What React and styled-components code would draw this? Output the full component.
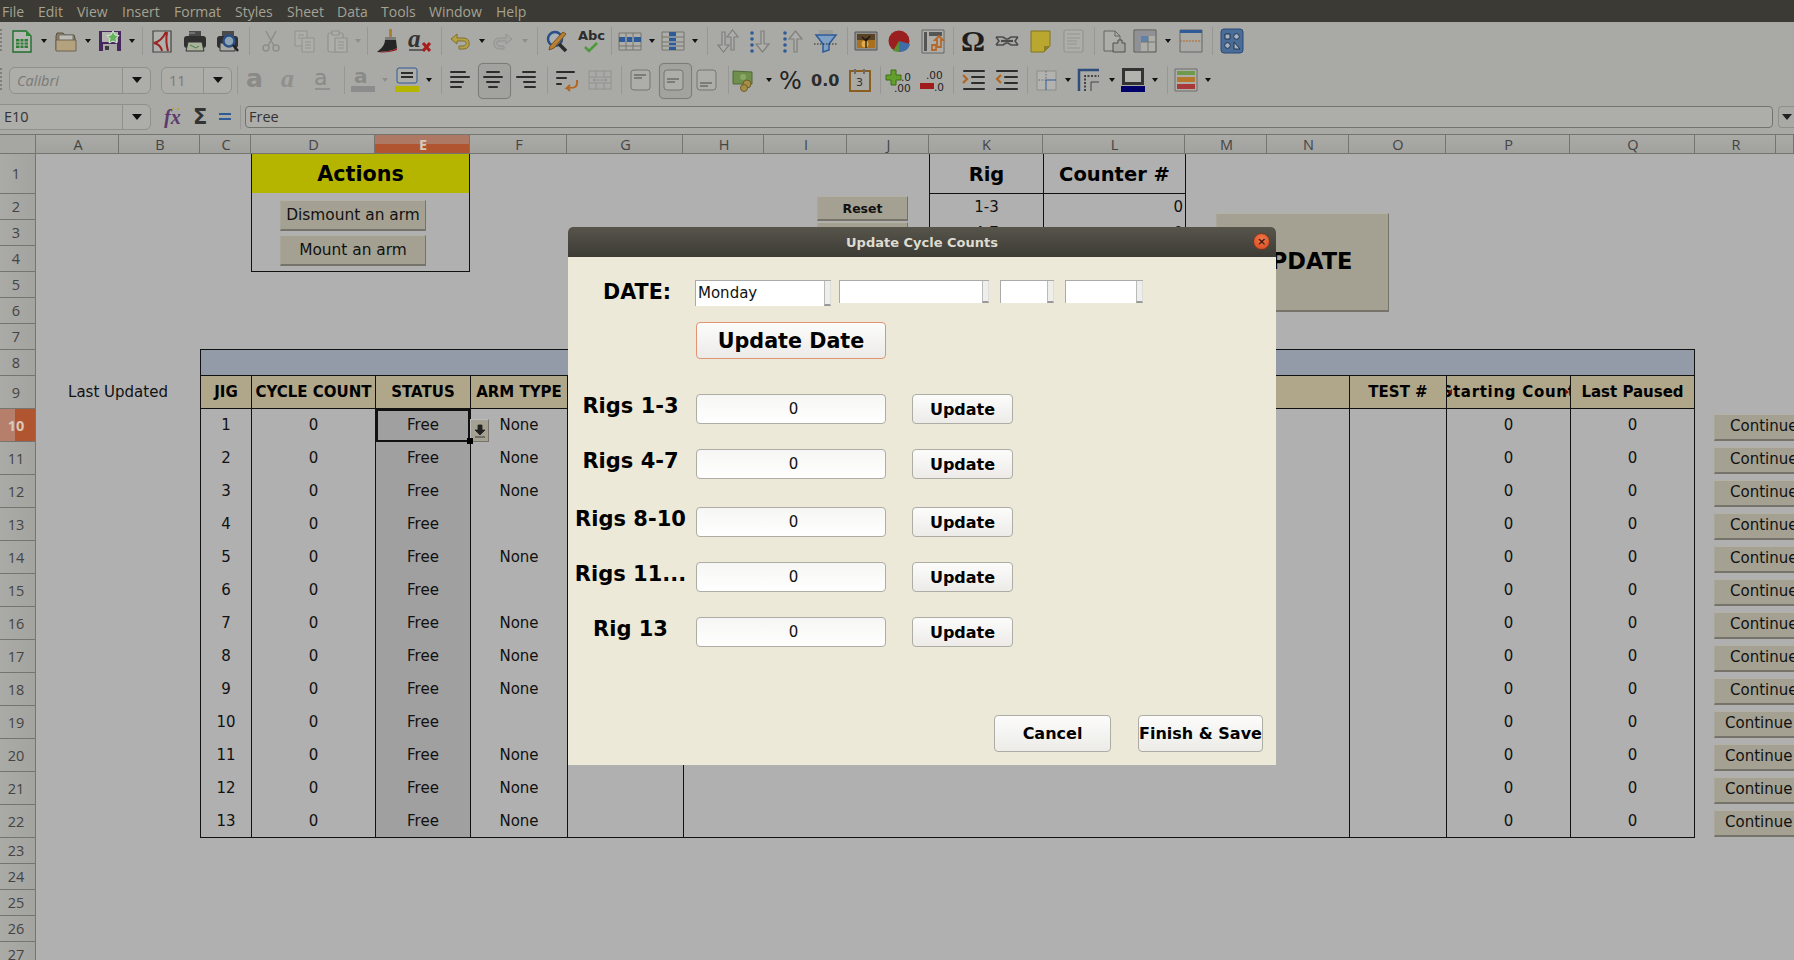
import React from 'react';
import styled, { createGlobalStyle } from 'styled-components';

const GlobalStyle = createGlobalStyle`
  html, body { margin: 0; padding: 0; background: #b0b0b0; overflow: hidden; }
  * { box-sizing: border-box; }
`;

const FONT = '"DejaVu Sans", Verdana, sans-serif';
const UI = '"Open Sans", "DejaVu Sans", sans-serif';
const SERIF = '"Liberation Serif", serif';

const T = ({ x, y, s = 12, w = 400, fill = '#222', i, f = FONT, children }) => (
  <text x={x} y={y} fontSize={s} fontWeight={w} fill={fill} fontStyle={i ? 'italic' : 'normal'} fontFamily={f}>{children}</text>
);

const bars = (ys, x1, x2) => ys.map((y, k) => <rect key={k} x={x1[k] ?? x1} y={y} width={(x2[k] ?? x2) - (x1[k] ?? x1)} height="2" rx="1" fill="#2c2c2c" />);

const ICONS = {
  doc: <><path d="M3 2h13l5 5v16H3z" fill="#b6b6b2" stroke="#1f6f2a" strokeWidth="1.4" /><path d="M16 1l5 6h-5z" fill="#2f8a38" /><path d="M6 10h12v9H6z" fill="#2d7d36" /><path d="M6 13h12M6 16h12M10 10v9M14 10v9" stroke="#b6b6b2" /></>,
  open: <><path d="M2 7l1-3h6l2 2h9l1 3v12H2z" fill="#8d7d60" stroke="#57503f" /><path d="M5 6h14v6H5z" fill="#bdbdb8" stroke="#77746a" /><path d="M2 11h20v11H2z" fill="#b4a27f" stroke="#6f6450" /></>,
  save: <><path d="M1 2h22v20H1z" fill="#46285e" /><path d="M4 3h16v10H4z" fill="#b4b4b0" /><path d="M5 15h14v7H5z" fill="#a9a9a5" /><path d="M7 17h4v4H7z" fill="#3b3b3b" /><path d="M15 2l2 4 4 .5-3 3 1 4.500-4-2-4 2 1-4.500-3-3 4-.5z" fill="#63b35b" stroke="#d9ead4" /></>,
  pdf: <><path d="M3 2h18v21H3z" fill="#b0b0ac" stroke="#444" strokeWidth="1.2" /><path d="M16 3C13 9 9 13 4 14c4 1 7 3 8 8M17 3c-1 6-1 12 1 19" fill="none" stroke="#9c2222" strokeWidth="2" /></>,
  print: <><path d="M6 2h12v6H6z" fill="#4a4a4a" /><rect x="1" y="7" width="22" height="12" rx="3" fill="#2f2f2f" /><path d="M6 4h6" stroke="#999" /><path d="M5 13h14l2 9H3z" fill="#a9b39c" stroke="#333" /><path d="M7 16l6 3 3-2" stroke="#4c7a4c" fill="none" /></>,
  preview: <><path d="M6 2h12v6H6z" fill="#4a4a4a" /><rect x="1" y="7" width="21" height="12" rx="3" fill="#2f2f2f" /><path d="M4 14h15v8H4z" fill="#a9a9a5" stroke="#333" /><circle cx="13" cy="12" r="5.500" fill="#8ea4b5" stroke="#2a4f86" strokeWidth="2.400" /><path d="M17 16l5 6" stroke="#222" strokeWidth="2.500" /></>,
  cut: <g fill="none" stroke="#8d8d8a" strokeWidth="1.500"><circle cx="7" cy="19" r="3" /><circle cx="17" cy="19" r="3" /><path d="M9 17L17 2M15 17L7 2" /></g>,
  copy: <g fill="#adadaa" stroke="#91918e"><path d="M3 2h12v15H3z" /><path d="M10 9h12v14H10z" /><path d="M6 6h6M6 9h3M13 13h6M13 16h6M13 19h6" /></g>,
  paste: <g fill="#adadaa" stroke="#91918e" strokeWidth="1.200"><rect x="3" y="4" width="15" height="19" rx="2" /><path d="M7 2h7v4H7z" /><path d="M10 9h12v14H10z" /><path d="M13 13h6M13 16h6M13 19h6" /></g>,
  brush: <><path d="M13 0h3v8h-3z" fill="#a88137" /><path d="M9 8h11v3H9z" fill="#7c7c78" /><path d="M9 11h11l1 8c-5 3-14 4-20 4 4-3 8-7 8-12z" fill="#252525" /><path d="M1 23c6 0 15-1 20-4v2c-5 2-14 3-20 2z" fill="#8c2020" /></>,
  clear: <><T x="0" y="18" s={25} w={700} i fill="#333" f={SERIF}>a</T><path d="M1 21h15" stroke="#444" strokeWidth="1.500" /><path d="M15 14l7 8M22 14l-7 8" stroke="#a51d1d" strokeWidth="3" /></>,
  undo: <path d="M9 5L3 10l6 5v-3h7c3 0 3 5-1 5h-4v3h5c7 0 7-11 0-11H9z" fill="#b6a246" stroke="#7f7030" />,
  redo: <path d="M15 5l6 5-6 5v-3H8c-3 0-3 5 1 5h4v3H8C1 20 1 9 8 9h7z" fill="#a5a5a2" stroke="#92928f" />,
  find: <><circle cx="10" cy="10" r="7" fill="#a9b0b7" stroke="#2a4f86" strokeWidth="2.500" /><path d="M14 15l7 7" stroke="#2a2a2a" strokeWidth="3.500" /><path d="M5 17L18 3l3 2L9 19l-5 2z" fill="#b98032" stroke="#76501e" /></>,
  spell: <><T x="0" y="11" s={13} w={700} fill="#2c2c2c">Abc</T><path d="M7 18l4 4 8-8" fill="none" stroke="#4d9a3a" strokeWidth="2.500" /></>,
  rows: <><path d="M1 4h22v17H1z" fill="#adadaa" stroke="#77776f" /><path d="M1 8h22v5H1z" fill="#2e5b96" /><path d="M8 4v17M15 4v17M1 17h22" stroke="#77776f" /><path d="M8 8v5M15 8v5" stroke="#b0b8c4" /></>,
  cols: <><path d="M1 3h22v18H1z" fill="#adadaa" stroke="#77776f" /><path d="M8 3h7v18H8z" fill="#2e5b96" /><path d="M1 8h22M1 13h22M1 17h22" stroke="#77776f" /><path d="M8 8h7M8 13h7M8 17h7" stroke="#b0b8c4" /></>,
  sort: <g fill="#adadaa" stroke="#7f7f7c" strokeWidth="1.200"><path d="M7 3h3v13h4l-5.500 7L3 16h4z" /><path d="M16 21h3V8h4l-5.500-7L12 8h4z" /></g>,
  sortasc: <><g fill="#2e5b96"><circle cx="4" cy="4" r="1.800" /><circle cx="4" cy="10" r="1.800" /><circle cx="4" cy="16" r="1.800" /><circle cx="4" cy="22" r="1.800" /></g><path d="M13 2h3v13h5l-6.500 8L8 15h5z" fill="#adadaa" stroke="#7f7f7c" strokeWidth="1.200" /></>,
  sortdesc: <><g fill="#2e5b96"><circle cx="4" cy="4" r="1.800" /><circle cx="4" cy="10" r="1.800" /><circle cx="4" cy="16" r="1.800" /><circle cx="4" cy="22" r="1.800" /></g><path d="M13 23h3V10h5L14.500 2 8 10h5z" fill="#adadaa" stroke="#7f7f7c" strokeWidth="1.200" /></>,
  filter: <><path d="M5 1h14v4H5z" fill="#9c9c99" /><path d="M2 6h20l-7 9v6l-6 2v-8z" fill="#7ea0c4" stroke="#2e5b96" strokeWidth="1.500" /><path d="M0 15h24" stroke="#222" strokeDasharray="1.500 1.500" /></>,
  image: <><path d="M1 3h22v18H1z" fill="#8f8f8c" stroke="#555" /><path d="M3 5h18v14H3z" fill="#a8701f" /><path d="M3 5h18v6H3z" fill="#5a4224" /><circle cx="11" cy="15" r="3.500" fill="#e0ad4a" /><path d="M12 19V9M12 12l-4-4M12 12l4-5" stroke="#1f1710" strokeWidth="1.300" fill="none" /></>,
  chart: <><circle cx="12" cy="12" r="10.500" fill="#9c1f1f" /><path d="M12 12l-6 10 6 1z" fill="#5d8e35" /><path d="M12 12l11 3c-1 5-5 8-11 8z" fill="#3d6ea5" /></>,
  pivot: <><path d="M1 1h22v23H1z" fill="#adadaa" stroke="#666" /><path d="M3 3h3v19H3zM8 3h13v4H8z" fill="#555" /><path d="M11 21v-5h5v-5h-2l4-4 4 4h-2v7h-5v3z" fill="none" stroke="#b5682a" strokeWidth="1.800" /></>,
  omega: <T x="-1" y="22" s={30} w={700} fill="#1e1e1e" f={SERIF}>Ω</T>,
  link: <g fill="none" stroke="#4c4c4c" strokeWidth="1.600"><path d="M1 8h7l3 2h2l3-2h7M1 16h7l3-2h2l3 2h7M1 8l3 4-3 4M23 8l-3 4 3 4" /><path d="M6 12h12" strokeWidth="2.200" /></g>,
  note: <><path d="M3 2h19v15l-6 6H3z" fill="#b9a730" stroke="#7f7420" /><path d="M16 23v-6h6z" fill="#8d7f25" /></>,
  headers: <g fill="#adadaa" stroke="#94948f" strokeWidth="1.200"><rect x="3" y="1" width="19" height="22" rx="2" /><path d="M6 5h13M6 9h13M6 12h10M6 15h10M6 19h13" /></g>,
  pprev: <><path d="M2 2h11l5 5v15H2z" fill="#adadaa" stroke="#66665f" /><path d="M13 2v5h5" fill="none" stroke="#66665f" /><path d="M12 14h5v-3h4v3h3v9H12z" transform="translate(-1 0)" fill="#a3a3a0" stroke="#4f4f4b" /></>,
  freeze: <><path d="M1 1h22v22H1z" fill="#adadaa" stroke="#55554f" /><path d="M2 2h20v5H2zM2 7h6v15H2z" fill="#8f9196" /><path d="M8 7h7v6H8z" fill="#5d82ad" /><path d="M8 13h14M15 7v15" stroke="#77776f" /></>,
  split: <><path d="M1 1h22v22H1z" fill="#a9a9a6" stroke="#666" /><path d="M1 1h22v3H1z" fill="#2e5b96" /><path d="M1 12h22" stroke="#b8682a" strokeDasharray="2 1" /></>,
  shapes: <><rect x="1" y="0" width="22" height="24" rx="3" fill="#4a6d98" stroke="#2b4b76" /><path d="M5 5h5v5H5z" fill="#a9b3bf" stroke="#1d3350" /><circle cx="16.500" cy="7.500" r="2.800" fill="#a9b3bf" stroke="#1d3350" /><circle cx="7.500" cy="16.500" r="2.800" fill="#a9b3bf" stroke="#1d3350" /><path d="M14 13v7h6z" fill="#a9b3bf" stroke="#1d3350" /></>,
  bold: <T x="1" y="19" s={25} w={700} fill="#8a8a87">a</T>,
  italic: <T x="3" y="19" s={26} w={700} i fill="#90908d" f={SERIF}>a</T>,
  underline: <><T x="3" y="17" s={22} fill="#8a8a87">a</T><path d="M4 21h15" stroke="#8a8a87" strokeWidth="1.500" /></>,
  color: <><T x="3" y="15" s={20} w={700} fill="#8a8a87">a</T><path d="M0 18h24v6H0z" fill="#8c8c8c" /></>,
  bg: <><rect x="2" y="0" width="20" height="15" rx="2" fill="#adadaa" stroke="#2e5b96" /><path d="M6 5h12M6 9h12" stroke="#2c2c2c" strokeWidth="2" /><path d="M0 18h24v6H0z" fill="#b5b500" /></>,
  alignl: bars([3, 8, 13, 18], 2, [18, 22, 16, 14]),
  alignc: bars([3, 8, 13, 18], [5, 2, 5, 7], [19, 22, 19, 17]),
  alignr: bars([3, 8, 13, 18], [8, 2, 9, 10], [22, 22, 22, 22]),
  wrap: <>{bars([3, 9, 15], 1, [20, 12, 7])}<path d="M22 12c1 8-3 8-10 8l3-3m-3 3l3 3" fill="none" stroke="#b2661f" strokeWidth="2" /></>,
  merge: <g fill="none" stroke="#92928f"><path d="M1 3h22v18H1zM1 9h22M1 15h22M8 3v6M16 3v6M8 15v6M16 15v6" /><path d="M5 12h14M5 12l2-2M5 12l2 2M19 12l-2-2M19 12l-2 2" /></g>,
  vtop: <><rect x="2" y="2" width="19" height="20" rx="3" fill="#adadaa" stroke="#77776f" /><path d="M5 7h12M5 10h8" stroke="#4a4a4a" /></>,
  vcenter: <><rect x="2" y="2" width="19" height="20" rx="3" fill="#adadaa" stroke="#77776f" /><path d="M5 11h12M5 14h8" stroke="#4a4a4a" /></>,
  vbottom: <><rect x="2" y="2" width="19" height="20" rx="3" fill="#adadaa" stroke="#77776f" /><path d="M5 15h12M5 18h8" stroke="#4a4a4a" /></>,
  money: <><path d="M0 3l19 1v12H0z" fill="#6f8f4d" stroke="#4f6b35" /><circle cx="10" cy="9" r="3" fill="#88a868" /><circle cx="14" cy="16" r="4" fill="#a58f45" stroke="#6f5f2a" /><circle cx="11" cy="20" r="3.500" fill="#a58f45" stroke="#6f5f2a" /></>,
  percent: <T x="-1" y="21" s={24} fill="#222">%</T>,
  number: <T x="-1" y="18" s={16} w={700} fill="#2c2c2c">0.0</T>,
  date: <><rect x="2" y="3" width="20" height="20" fill="#a9a9a6" stroke="#8a5d21" strokeWidth="2" /><path d="M7 1v5M16 1v5" stroke="#6b6b6b" strokeWidth="2" /><T x="8" y="18" s={11} fill="#333">3</T></>,
  adddec: <><path d="M6 2h5v5h5v5h-5v5H6v-5H1V7h5z" transform="translate(-1 0)" fill="#62a02b" stroke="#3c6e17" /><T x="15" y="13" s={10.500} fill="#222">.0</T><T x="8" y="24" s={10.500} fill="#222">.00</T></>,
  deldec: <><T x="7" y="11" s={10.500} fill="#222">.00</T><path d="M1 15h14v6H1z" fill="#a01c1c" /><T x="15" y="23" s={10.500} fill="#222">.0</T></>,
  indent: <>{bars([2, 8, 14, 20], [2, 10, 10, 2], 24)}<path d="M2 7l4 4-4 4" fill="none" stroke="#b2661f" strokeWidth="2.200" /></>,
  outdent: <>{bars([2, 8, 14, 20], [2, 10, 10, 2], 24)}<path d="M7 7l-4 4 4 4" fill="none" stroke="#b2661f" strokeWidth="2.200" /></>,
  border: <><path d="M3 3h19v19H3z" fill="#b2b2af" stroke="#8d8d8a" /><path d="M12 3v9H3" fill="none" stroke="#666" strokeDasharray="1.500 1.500" /><path d="M12 22V12h10" fill="none" stroke="#2e5b96" /></>,
  bstyle: <><path d="M2 23V2h20" fill="none" stroke="#2e4d78" strokeWidth="2.500" /><path d="M8 23V8h14" fill="none" stroke="#222" strokeWidth="1.500" strokeDasharray="2 1.500" /><path d="M14 23v-9h8" fill="none" stroke="#444" /></>,
  bcolor: <><path d="M1 0h22v17H1z" fill="#333" /><path d="M4 3h16v11H4z" fill="#b2b2af" /><path d="M0 18h24v6H0z" fill="#00006b" /></>,
  cond: <><path d="M1 1h22v22H1z" fill="#adadaa" stroke="#6d6d68" /><path d="M3 3h18v4H3z" fill="#6f9a4e" /><path d="M3 9h18v5H3z" fill="#b5782d" /><path d="M3 16h18v5H3z" fill="#a93a3a" /></>,
};

const TOOLBAR_ONE = [
  ['doc', 28], ['arr', 16], ['open', 28], ['arr', 16], ['save', 28], ['arr', 16], ['sep', 5],
  ['pdf', 33], ['print', 33], ['preview', 33], ['sep', 10], ['cut', 33], ['copy', 33], ['paste', 33], ['arrd', 9], ['sep', 10],
  ['brush', 31], ['clear', 34], ['sep', 8], ['undo', 30], ['arr', 14], ['redo', 28], ['arrd', 16], ['sep', 8],
  ['find', 32], ['spell', 34], ['sep', 8], ['rows', 30], ['arr', 14], ['cols', 28], ['arr', 16], ['sep', 8],
  ['sort', 32], ['sortasc', 34], ['sortdesc', 32], ['filter', 34], ['sep', 8], ['image', 30], ['chart', 36], ['pivot', 32], ['sep', 9],
  ['omega', 32], ['link', 34], ['note', 32], ['headers', 34], ['sep', 8], ['pprev', 32], ['freeze', 30], ['arr', 16], ['split', 30], ['sep', 12], ['shapes', 28],
];

const TOOLBAR_TWO = [
  ['sep', 10], ['bold', 30], ['italic', 36], ['underline', 30], ['sep', 12], ['color', 26], ['arrd', 18], ['bg', 26], ['arr', 17], ['sep', 8],
  ['alignl', 30], ['alignc', 36, true], ['alignr', 30], ['sep', 12], ['wrap', 28], ['merge', 38], ['sep', 4],
  ['vtop', 36], ['vcenter', 30, true], ['vbottom', 36], ['sep', 6], ['money', 28], ['arr', 20], ['percent', 26], ['number', 38], ['date', 34], ['sep', 6],
  ['adddec', 30], ['deldec', 36], ['sep', 8], ['indent', 32], ['outdent', 34], ['sep', 8], ['border', 30], ['arr', 14], ['bstyle', 28], ['arr', 18],
  ['bcolor', 24], ['arr', 20], ['sep', 5], ['cond', 32], ['arr', 12],
];

const MENUS = [['File', 36], ['Edit', 39], ['View', 45], ['Insert', 52], ['Format', 61], ['Styles', 52], ['Sheet', 50], ['Data', 44], ['Tools', 48], ['Window', 67], ['Help', 40]];
const COLUMNS = ['A', 'B', 'C', 'D', 'E', 'F', 'G', 'H', 'I', 'J', 'K', 'L', 'M', 'N', 'O', 'P', 'Q', 'R', ''];
const ROW_NUMBERS = Array.from({ length: 27 }, (_, i) => i + 1);
const NO_ARM = [4, 6, 10];
const JIGS = Array.from({ length: 13 }, (_, i) => i + 1);
const RIGS = [['1-3', 0], ['4-7', 0], ['8-10', 0], ['11-12', 0], ['13', 0]];
const DIALOG_RIGS = [['Rigs 1-3', 35], ['Rigs 4-7', 25], ['Rigs 8-10', 28], ['Rigs 11...', 25], ['Rig 13', 25]];

const Page = styled.div`
  width: 1794px;
  height: 960px;
  position: relative;
  overflow: hidden;
  display: flex;
  flex-direction: column;
  background: #b0b0b0;
  font-family: ${FONT};
`;

const MenuBar = styled.div`
  height: 22px;
  flex: none;
  display: flex;
  align-items: center;
  padding-left: 2px;
  background: #3b3a34;
`;

const MenuItem = styled.span`
  width: ${(p) => p.$w}px;
  flex: none;
  color: #a5a293;
  font: 14px ${UI};
`;

const ToolArea = styled.div`
  background: #a9a9a6;
  flex: none;
`;

const ToolRow = styled.div`
  display: flex;
  align-items: center;
  height: ${(p) => p.$h}px;
  padding-bottom: 2px;
`;

const Grip = styled.div`
  width: 2px;
  height: 24px;
  margin-right: ${(p) => p.$gap}px;
  background: repeating-linear-gradient(#7f7f7c 0 2px, transparent 2px 4px);
`;

const ToolSlot = styled.div`
  width: ${(p) => p.$w}px;
  height: 24px;
  flex: none;
  display: flex;
  align-items: center;
  justify-content: center;
  position: relative;
  ${(p) => p.$active && `
    &::before {
      content: '';
      position: absolute;
      left: 50%;
      top: -5px;
      width: 31px;
      height: 34px;
      margin-left: -15.5px;
      border: 1px solid #7b7b78;
      border-radius: 5px;
      background: #a2a29f;
      box-shadow: 0 0 1px #8d8d8a;
    }
    svg { position: relative; }
  `}
`;

const ToolSep = styled.div`
  width: ${(p) => p.$w}px;
  height: 28px;
  flex: none;
  display: flex;
  justify-content: center;
  &::after {
    content: '';
    width: 1px;
    background: #979794;
  }
`;

const ToolArrow = styled.div`
  width: ${(p) => p.$w}px;
  flex: none;
  display: flex;
  justify-content: center;
  &::after {
    content: '';
    border-left: 3.5px solid transparent;
    border-right: 3.5px solid transparent;
    border-top: 4px solid ${(p) => (p.$off ? '#8e8e8b' : '#111')};
  }
`;

const Combo = styled.div`
  width: ${(p) => p.$w}px;
  height: 27px;
  margin-right: ${(p) => p.$mr || 0}px;
  flex: none;
  display: flex;
  align-items: stretch;
  border: 1px solid #8f8f8b;
  border-radius: 6px;
  background: #adadaa;
`;

const ComboText = styled.div`
  flex: 1;
  display: flex;
  align-items: center;
  padding-left: 7px;
  color: #7a7a76;
  font: ${(p) => (p.$italic ? 'italic' : 'normal')} 14.5px ${UI};
`;

const ComboArrow = styled.div`
  width: 28px;
  flex: none;
  display: flex;
  align-items: center;
  justify-content: center;
  border-left: 1px solid #8f8f8b;
  &::after {
    content: '';
    border-left: 5px solid transparent;
    border-right: 5px solid transparent;
    border-top: 6px solid #111;
  }
`;

const FormulaBar = styled.div`
  height: 34px;
  flex: none;
  display: flex;
  align-items: center;
  padding-bottom: 1px;
  background: #a9a9a6;
`;

const NameBox = styled(Combo)`
  margin-left: -1px;
  height: 26px;
  width: 152px;
  border-radius: 0 6px 6px 0;
  background: #adadaa;
`;

const NameText = styled(ComboText)`
  color: #333;
  padding-left: 4px;
`;

const FormulaIcons = styled.div`
  width: 90px;
  flex: none;
  display: flex;
  align-items: center;
  justify-content: space-between;
  padding: 0 8px 0 12px;
  height: 24px;
  border-right: 1px solid #979794;
`;

const FormulaInput = styled.div`
  flex: 1;
  height: 22px;
  margin-left: 4px;
  padding-left: 3px;
  border: 1px solid #74746f;
  border-radius: 4px;
  background: #adadaa;
  color: #333;
  font: 14.5px/20px ${UI};
`;

const FormulaDrop = styled.div`
  width: 16px;
  height: 22px;
  margin-left: 5px;
  flex: none;
  border: 1px solid #8f8f8b;
  border-right: 0;
  border-radius: 4px 0 0 4px;
  display: flex;
  align-items: center;
  justify-content: center;
  &::after {
    content: '';
    border-left: 5px solid transparent;
    border-right: 5px solid transparent;
    border-top: 6px solid #222;
  }
`;

const Sheet = styled.div`
  display: grid;
  flex: none;
  grid-template-columns: 36px 83px 81px 51px 124px 95px 97px 116px 81px 83px 82px 114px 142px 82px 82px 97px 124px 125px 81px 18px;
  grid-template-rows: 20px 40px repeat(7, 26px) repeat(14, 33px) repeat(5, 26px);
  background: #b0b0b0;
`;

const Corner = styled.div`
  grid-column: 1;
  grid-row: 1;
  background: #a6a6a3;
  border-top: 1px solid #747471;
  border-right: 1px solid #747471;
  border-bottom: 1px solid #747471;
`;

const ColHead = styled.div`
  grid-column: ${(p) => p.$col};
  grid-row: 1;
  display: flex;
  align-items: center;
  justify-content: center;
  padding-left: 2px;
  border-top: 1px solid #747471;
  border-right: 1px solid #747471;
  border-bottom: 1px solid #747471;
  font: 14.5px ${UI};
  color: ${(p) => (p.$on ? '#d8c9bb' : '#444')};
  font-weight: ${(p) => (p.$on ? 700 : 400)};
  background: ${(p) => (p.$on ? 'linear-gradient(#ad7964 0 9px, #b0552f 9px)' : 'linear-gradient(#aaaaa7, #a1a19e)')};
`;

const RowHead = styled.div`
  grid-column: 1;
  grid-row: ${(p) => p.$row};
  display: flex;
  align-items: center;
  justify-content: center;
  padding-right: 3px;
  border-right: 1px solid #747471;
  border-bottom: 1px solid #747471;
  font: 14.5px ${UI};
  color: ${(p) => (p.$on ? '#d8c9bb' : '#444')};
  font-weight: ${(p) => (p.$on ? 700 : 400)};
  background: ${(p) => (p.$on ? 'linear-gradient(90deg, #b67f6b 0 15px, #b0552f 15px)' : 'linear-gradient(90deg, #aaaaa7, #a3a3a0)')};
`;

const LastUpdated = styled.div`
  grid-column: 2 / 4;
  grid-row: 10;
  display: flex;
  align-items: center;
  justify-content: center;
  padding-bottom: 2px;
  color: #111;
  font-size: 15px;
`;

const ActionsPanel = styled.div`
  grid-column: 5 / 7;
  grid-row: 2 / 6;
  display: flex;
  flex-direction: column;
  border: 1px solid #111;
  border-top: 0;
`;

const ActionsTitle = styled.div`
  height: 39px;
  flex: none;
  display: flex;
  align-items: center;
  justify-content: center;
  background: #b5b500;
  color: #000;
  font-size: 20.7px;
  font-weight: 700;
`;

const ActionStack = styled.div`
  display: flex;
  flex-direction: column;
  gap: 4px;
  padding: 7px 0 0 28px;
`;

const SheetButton = styled.div`
  width: ${(p) => p.$w}px;
  height: ${(p) => p.$h}px;
  flex: none;
  display: flex;
  align-items: center;
  justify-content: center;
  background: #a4a193;
  border-right: 1px solid #75736a;
  border-bottom: 2px solid #75736a;
  border-top: 1px solid #b3b1a5;
  border-left: 1px solid #a9a79b;
  color: #111;
  font-size: ${(p) => p.$fs || 15.4}px;
  font-weight: ${(p) => (p.$bold ? 700 : 400)};
`;

const ResetStack = styled.div`
  grid-column: 10 / 12;
  grid-row: 2 / 6;
  display: flex;
  flex-direction: column;
  gap: 1px;
  padding: 42px 0 0 53px;
`;

const RigTable = styled.div`
  grid-column: 12 / 14;
  grid-row: 2 / 9;
  display: grid;
  grid-template-columns: 114px 142px;
  grid-auto-rows: 26px;
  grid-template-rows: 40px;
  align-self: start;
  border-left: 1px solid #111;
  margin-right: -1px;
`;

const RigHead = styled.div`
  display: flex;
  align-items: center;
  justify-content: center;
  padding-top: 1px;
  border-right: 1px solid #111;
  border-bottom: 1px solid #111;
  color: #000;
  font-size: 19.5px;
  font-weight: 700;
`;

const RigCell = styled.div`
  display: flex;
  align-items: center;
  justify-content: ${(p) => (p.$right ? 'flex-end' : 'center')};
  padding-right: ${(p) => (p.$right ? 2 : 0)}px;
  border-right: 1px solid #111;
  color: #111;
  font-size: 15px;
`;

const UpdateWrap = styled.div`
  grid-column: 14 / 17;
  grid-row: 3 / 8;
  padding: 19px 0 0 31px;
`;

const BigButton = styled(SheetButton)`
  width: 173px;
  height: 99px;
  padding-bottom: 2px;
  color: #000;
  font-size: 22.5px;
  font-weight: 700;
`;

const Table = styled.div`
  grid-column: 4 / 19;
  grid-row: 9 / 24;
  align-self: start;
  margin-top: -1px;
  display: grid;
  grid-template-columns: 51px 124px 95px 97px 116px 666px 97px 124px 1fr;
  grid-template-rows: 26px 33px repeat(12, 33px) 32px;
  border: 1px solid #111;
`;

const Banner = styled.div`
  grid-column: 1 / -1;
  background: #949ba8;
  border-bottom: 1px solid #111;
`;

const HeadCell = styled.div`
  position: relative;
  display: flex;
  align-items: center;
  justify-content: center;
  overflow: hidden;
  white-space: nowrap;
  background: #b0a68a;
  border-right: ${(p) => (p.$last ? 0 : 1)}px solid #111;
  border-bottom: 1px solid #111;
  color: #000;
  font-size: 15px;
  font-weight: 700;
  letter-spacing: ${(p) => (p.$clipped ? 0.7 : 0)}px;
`;

const ClipMark = styled.span`
  position: absolute;
  top: 13px;
  ${(p) => (p.$right ? 'right: 1px;' : 'left: 1px;')}
  border-top: 3.5px solid transparent;
  border-bottom: 3.5px solid transparent;
  ${(p) => (p.$right ? 'border-left' : 'border-right')}: 4px solid #7a0d0d;
`;

const Cell = styled.div`
  position: relative;
  display: flex;
  align-items: center;
  justify-content: center;
  padding-bottom: ${(p) => (p.$tail ? 0 : 2)}px;
  background: ${(p) => (p.$status ? '#a0a0a0' : 'transparent')};
  border-right: ${(p) => (p.$last ? 0 : 1)}px solid #111;
  color: #111;
  font-size: 15px;
  ${(p) => p.$selected && `
    box-shadow: inset 0 0 0 2px #111;
    &::after {
      content: '';
      position: absolute;
      right: -3px;
      bottom: -2px;
      width: 6px;
      height: 6px;
      background: #000;
      z-index: 2;
    }
  `}
`;

const CellDrop = styled.div`
  position: absolute;
  left: -1px;
  top: 10px;
  width: 19px;
  height: 23px;
  display: flex;
  align-items: center;
  justify-content: center;
  background: #a4a193;
  border-right: 1px solid #75736a;
  border-bottom: 1px solid #75736a;
  border-top: 1px solid #bbb;
  border-left: 1px solid #bbb;
`;

const ContinueWrap = styled.div`
  grid-column: 19 / 21;
  grid-row: ${(p) => p.$row};
  padding: 5px 0 0 19px;
  overflow: hidden;
`;

const ContinueBtn = styled(SheetButton)`
  justify-content: flex-start;
  padding-left: ${(p) => p.$pad}px;
  padding-bottom: 2px;
  width: 100px;
  height: 27px;
  font-size: 15px;
`;

const Dialog = styled.div`
  position: absolute;
  left: 568px;
  top: 227px;
  width: 708px;
  height: 538px;
  display: flex;
  flex-direction: column;
  background: #ece9d8;
  border-radius: 5px 5px 0 0;
  z-index: 5;
`;

const TitleBar = styled.div`
  height: 30px;
  flex: none;
  position: relative;
  display: flex;
  align-items: center;
  justify-content: center;
  border-radius: 5px 5px 0 0;
  background: linear-gradient(#57554b, #3c3b35);
  color: #dedcd0;
  font-size: 13px;
  font-weight: 700;
`;

const CloseDot = styled.div`
  position: absolute;
  right: 6px;
  top: 6px;
  width: 17px;
  height: 17px;
  border-radius: 50%;
  background: radial-gradient(circle at 50% 35%, #f27a4d, #d8461c);
  border: 1px solid #7a3a22;
  display: flex;
  align-items: center;
  justify-content: center;
  color: #3a1a10;
  font-size: 11px;
  line-height: 1;
`;

const DateRow = styled.div`
  display: flex;
  align-items: flex-start;
  margin-top: 23px;
`;

const DateLabel = styled.div`
  width: 127px;
  flex: none;
  padding-left: 35px;
  color: #000;
  font-size: 20.7px;
  font-weight: 700;
  line-height: 24px;
`;

const DateField = styled.div`
  position: relative;
  width: ${(p) => p.$w}px;
  height: ${(p) => p.$h}px;
  margin-right: ${(p) => p.$mr || 0}px;
  flex: none;
  padding-left: 2px;
  background: #fff;
  border-top: 1px solid #aaa;
  border-left: 1px solid #aaa;
  color: #111;
  font-size: 15px;
  line-height: 24px;
  &::after {
    content: '';
    position: absolute;
    right: 0;
    top: 0;
    bottom: 0;
    width: 5px;
    background: #eeeeea;
    border-left: 1px solid #bbb;
    border-right: 1px solid #ddd;
    border-bottom: 2px solid #999;
  }
`;

const PushButton = styled.div`
  display: flex;
  align-items: center;
  justify-content: center;
  flex: none;
  width: ${(p) => p.$w}px;
  height: ${(p) => p.$h}px;
  white-space: nowrap;
  border: 1px solid ${(p) => (p.$focus ? '#e09474' : '#adada6')};
  border-radius: 4px;
  background: linear-gradient(#fcfcfb, #ecebe8);
  color: #000;
  font-size: ${(p) => p.$fs}px;
  font-weight: 700;
`;

const DateAction = styled.div`
  display: flex;
  margin: 16px 0 0 128px;
`;

const RigRow = styled.div`
  display: flex;
  align-items: center;
  height: 30px;
  margin-top: ${(p) => p.$mt}px;
`;

const RigLabel = styled.div`
  width: 128px;
  flex: none;
  padding: 0 3px 7px 0;
  text-align: center;
  white-space: nowrap;
  color: #000;
  font-size: 21px;
  font-weight: 700;
`;

const CountInput = styled.div`
  width: 190px;
  height: 30px;
  flex: none;
  margin-right: 26px;
  display: flex;
  align-items: center;
  justify-content: center;
  padding-left: 5px;
  border: 1px solid #adada6;
  border-radius: 4px;
  background: linear-gradient(#f6f6f4, #fff);
  color: #111;
  font-size: 15px;
`;

const DialogFooter = styled.div`
  display: flex;
  justify-content: flex-end;
  gap: 27px;
  margin-top: auto;
  padding: 0 13px 13px 0;
`;

const Tool = ({ name }) => (
  <svg width="24" height="24" viewBox="0 0 24 24" overflow="visible">{ICONS[name]}</svg>
);

const ToolItems = ({ items }) => items.map(([kind, w, active], i) => {
  if (kind === 'sep') return <ToolSep key={i} $w={w} />;
  if (kind === 'arr' || kind === 'arrd') return <ToolArrow key={i} $w={w} $off={kind === 'arrd'} />;
  return <ToolSlot key={i} $w={w} $active={active}><Tool name={kind} /></ToolSlot>;
});

const App = () => {
  return (
    <Page>
      <GlobalStyle />
      <MenuBar>
        {MENUS.map(([label, w]) => <MenuItem key={label} $w={w}>{label}</MenuItem>)}
      </MenuBar>
      <ToolArea>
        <ToolRow $h={40}>
          <Grip $gap={6} />
          <ToolItems items={TOOLBAR_ONE} />
        </ToolRow>
        <ToolRow $h={38}>
          <Grip $gap={7} />
          <Combo $w={142} $mr={10}><ComboText $italic>Calibri</ComboText><ComboArrow /></Combo>
          <Combo $w={71}><ComboText>11</ComboText><ComboArrow /></Combo>
          <ToolItems items={TOOLBAR_TWO} />
        </ToolRow>
      </ToolArea>
      <FormulaBar>
        <NameBox><NameText>E10</NameText><ComboArrow /></NameBox>
        <FormulaIcons>
          <svg width="20" height="22" viewBox="0 0 20 22"><T x="1" y="18" s={20} i w={700} fill="#5b3a6b" f={SERIF}>fx</T><path d="M9 3h2M14 3h2" stroke="#b5a23a" strokeWidth="2" /></svg>
          <svg width="16" height="22" viewBox="0 0 16 22"><T x="0" y="18" s={21} w={700} fill="#333">Σ</T></svg>
          <svg width="14" height="20" viewBox="0 0 14 20"><path d="M1 7h12M1 12h12" stroke="#2e5b96" strokeWidth="2" /></svg>
        </FormulaIcons>
        <FormulaInput>Free</FormulaInput>
        <FormulaDrop />
      </FormulaBar>
      <Sheet>
        <Corner />
        {COLUMNS.map((c, i) => <ColHead key={i} $col={i + 2} $on={c === 'E'}>{c}</ColHead>)}
        {ROW_NUMBERS.map((n) => <RowHead key={n} $row={n + 1} $on={n === 10}>{n}</RowHead>)}

        <LastUpdated>Last Updated</LastUpdated>

        <ActionsPanel>
          <ActionsTitle>Actions</ActionsTitle>
          <ActionStack>
            <SheetButton $w={146} $h={31}>Dismount an arm</SheetButton>
            <SheetButton $w={146} $h={31}>Mount an arm</SheetButton>
          </ActionStack>
        </ActionsPanel>

        <ResetStack>
          <SheetButton $w={91} $h={25} $fs={12.5} $bold>Reset</SheetButton>
          <SheetButton $w={91} $h={25} />
        </ResetStack>

        <RigTable>
          <RigHead>Rig</RigHead>
          <RigHead>Counter #</RigHead>
          {RIGS.map(([rig, count]) => (
            <React.Fragment key={rig}>
              <RigCell>{rig}</RigCell>
              <RigCell $right>{count}</RigCell>
            </React.Fragment>
          ))}
        </RigTable>

        <UpdateWrap>
          <BigButton>UPDATE</BigButton>
        </UpdateWrap>

        <Table>
          <Banner />
          <HeadCell>JIG</HeadCell>
          <HeadCell>CYCLE COUNT</HeadCell>
          <HeadCell>STATUS</HeadCell>
          <HeadCell>ARM TYPE</HeadCell>
          <HeadCell />
          <HeadCell />
          <HeadCell>TEST #</HeadCell>
          <HeadCell $clipped>Starting Count<ClipMark /><ClipMark $right /></HeadCell>
          <HeadCell $last>Last Paused</HeadCell>
          {JIGS.map((j) => (
            <React.Fragment key={j}>
              <Cell $tail={j === 13}>{j}</Cell>
              <Cell $tail={j === 13}>0</Cell>
              <Cell $tail={j === 13} $status $selected={j === 1}>Free</Cell>
              <Cell $tail={j === 13}>
                {j === 1 && (
                  <CellDrop>
                    <svg width="12" height="14" viewBox="0 0 12 14"><path d="M4 1h4v5h3l-5 5-5-5h3zM1 13h10" fill="#222" stroke="#222" strokeWidth="0.8" /></svg>
                  </CellDrop>
                )}
                {NO_ARM.includes(j) ? '' : 'None'}
              </Cell>
              <Cell />
              <Cell />
              <Cell />
              <Cell $tail={j === 13}>0</Cell>
              <Cell $tail={j === 13} $last>0</Cell>
            </React.Fragment>
          ))}
        </Table>

        {JIGS.map((j) => (
          <ContinueWrap key={j} $row={j + 10}>
            <ContinueBtn $pad={j >= 10 ? 10 : 15}>Continue</ContinueBtn>
          </ContinueWrap>
        ))}
      </Sheet>

      <Dialog>
        <TitleBar>
          Update Cycle Counts
          <CloseDot>×</CloseDot>
        </TitleBar>
        <DateRow>
          <DateLabel>DATE:</DateLabel>
          <DateField $w={136} $h={26} $mr={8}>Monday</DateField>
          <DateField $w={150} $h={23} $mr={11} />
          <DateField $w={54} $h={23} $mr={11} />
          <DateField $w={78} $h={23} />
        </DateRow>
        <DateAction>
          <PushButton $w={190} $h={37} $fs={20.7} $focus>Update Date</PushButton>
        </DateAction>
        {DIALOG_RIGS.map(([label, mt]) => (
          <RigRow key={label} $mt={mt}>
            <RigLabel>{label}</RigLabel>
            <CountInput>0</CountInput>
            <PushButton $w={101} $h={30} $fs={16}>Update</PushButton>
          </RigRow>
        ))}
        <DialogFooter>
          <PushButton $w={117} $h={37} $fs={16}>Cancel</PushButton>
          <PushButton $w={125} $h={37} $fs={16}>Finish &amp; Save</PushButton>
        </DialogFooter>
      </Dialog>
    </Page>
  );
};

export default App;
